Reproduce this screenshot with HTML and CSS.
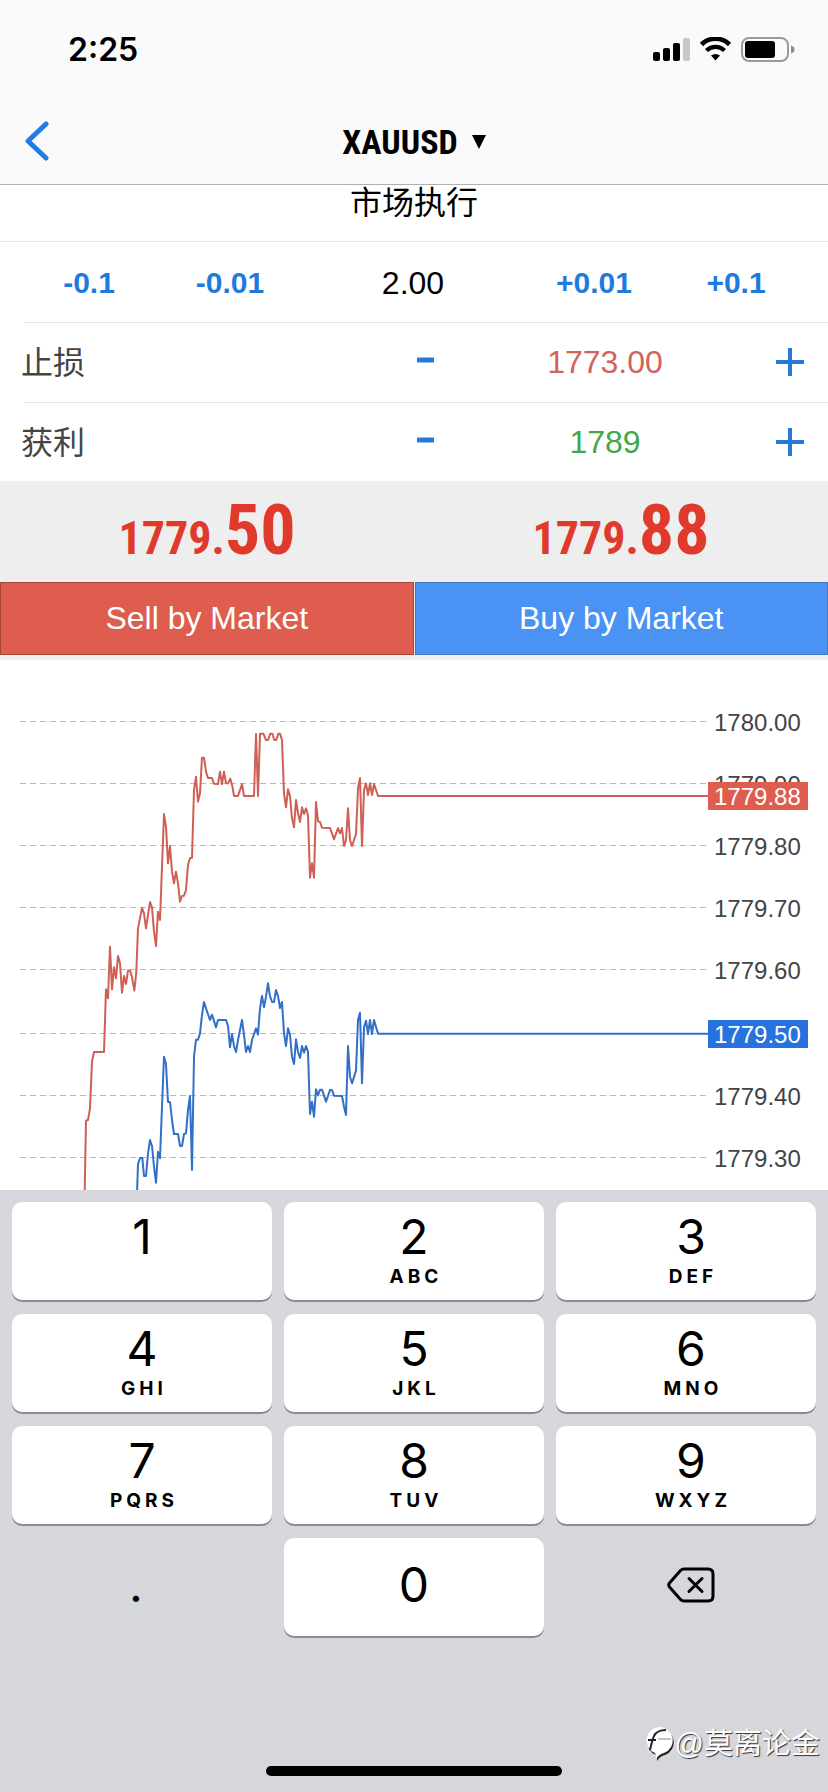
FILE: index.html
```html
<!DOCTYPE html>
<html lang="zh-CN">
<head>
<meta charset="utf-8">
<meta name="viewport" content="width=device-width, initial-scale=1">
<title>XAUUSD</title>
<link rel="stylesheet" href="styles.css">
</head>
<body>
<div class="screen">
  <header class="header">
    <div class="status">
      <span class="time">2:25</span>
      <svg class="status-icons" width="142" height="26" viewBox="0 0 142 26" aria-hidden="true">
        <rect x="0" y="15" width="7" height="9" rx="2"/>
        <rect x="10" y="11" width="7" height="13" rx="2"/>
        <rect x="20" y="6" width="7" height="18" rx="2"/>
        <rect x="30" y="1" width="7" height="23" rx="2" fill="#c8c8c8"/>
        <path d="M48.500 7.500a20 20 0 0 1 28 0" fill="none" stroke="#000" stroke-width="4.600"/>
        <path d="M53.500 13.500a13 13 0 0 1 18 0" fill="none" stroke="#000" stroke-width="4.400"/>
        <path d="M58 18.500q4.500-3 9 0l-4.500 5z"/>
        <rect x="89" y="1" width="46" height="23" rx="7" fill="none" stroke="#9a9a9a" stroke-width="2"/>
        <rect x="92" y="4" width="30" height="17" rx="3"/>
        <path d="M138 8.500q3.500 1 3.500 4t-3.500 4z" fill="#8c8c8c"/>
      </svg>
    </div>
    <nav class="nav">
      <button class="back" type="button" aria-label="返回">
        <svg width="26" height="40" viewBox="0 0 26 40" aria-hidden="true"><path d="M22 3L4 20l18 17" fill="none" stroke="#1f7ce4" stroke-width="5" stroke-linecap="round" stroke-linejoin="round"/></svg>
      </button>
      <button class="symbol" type="button">XAUUSD
        <svg width="14" height="14" viewBox="0 0 14 14" aria-hidden="true"><path d="M0 0h14L7 14z"/></svg>
      </button>
    </nav>
  </header>

  <main class="order">
    <div class="exec">市场执行</div>
    <div class="volume">
      <button class="step" type="button">-0.1</button>
      <button class="step" type="button">-0.01</button>
      <input class="value" aria-label="Volume" value="2.00">
      <button class="step" type="button">+0.01</button>
      <button class="step" type="button">+0.1</button>
    </div>
    <div class="level">
      <label class="level-name" for="sl">止损</label>
      <button class="sign" type="button" aria-label="止损 -"><svg width="28" height="28" viewBox="0 0 28 28"><path d="M6 12h17" stroke-width="5"/></svg></button>
      <input class="value stop" id="sl" value="1773.00">
      <button class="sign" type="button" aria-label="止损 +"><svg width="28" height="28" viewBox="0 0 28 28"><path d="M0 14h28M14 0v28" stroke-width="4"/></svg></button>
    </div>
    <div class="level">
      <label class="level-name" for="tp">获利</label>
      <button class="sign" type="button" aria-label="获利 -"><svg width="28" height="28" viewBox="0 0 28 28"><path d="M6 12h17" stroke-width="5"/></svg></button>
      <input class="value profit" id="tp" value="1789">
      <button class="sign" type="button" aria-label="获利 +"><svg width="28" height="28" viewBox="0 0 28 28"><path d="M0 14h28M14 0v28" stroke-width="4"/></svg></button>
    </div>
    <div class="prices">
      <div class="price">1779.<span class="pips">50</span></div>
      <div class="price">1779.<span class="pips">88</span></div>
    </div>
    <div class="actions">
      <button class="deal sell" type="button">Sell by Market</button>
      <button class="deal buy" type="button">Buy by Market</button>
    </div>
    <svg class="chart" viewBox="0 1 828 530" role="img" aria-label="XAUUSD">
      <g class="grid">
        <path d="M20 62.500H708M20 124.500H708M20 186.500H708M20 248.500H708M20 310.500H708M20 374.500H708M20 436.500H708M20 498.500H708"/>
      </g>
      <g class="axis">
        <text x="714" y="72">1780.00</text>
        <text x="714" y="134">1779.90</text>
        <text x="714" y="196">1779.80</text>
        <text x="714" y="258">1779.70</text>
        <text x="714" y="320">1779.60</text>
        <text x="714" y="446">1779.40</text>
        <text x="714" y="508">1779.30</text>
      </g>
      <g transform="translate(60 41) scale(.333333)">
        <polyline class="line ask" points="74,1480 78,1262 84,1260 90,1225 96,1085 102,1056 132,1056 138,868 144,895 150,740 156,868 162,802 168,835 174,768 180,790 186,878 192,828 198,852 204,812 210,811 216,832 223,872 229,815 234,685 240,655 246,624 252,640 258,685 270,606 276,622 282,695 288,738 294,635 300,660 306,500 312,342 318,380 324,490 330,438 336,515 342,550 348,515 354,550 360,605 366,588 372,587 378,570 384,495 390,474 396,473 402,270 408,230 414,305 420,280 426,173 432,173 438,215 444,234 456,234 462,251 474,252 480,215 486,252 492,215 498,250 504,250 511,236 517,258 522,288 534,288 546,252 552,288 582,288 588,102 594,288 600,101 610,101 618,120 624,120 631,101 637,101 643,120 649,120 655,101 660,101 666,120 672,280 678,322 684,268 690,288 696,355 702,382 708,300 714,340 720,366 726,322 732,342 738,325 744,345 750,533 756,490 762,533 768,306 774,364 780,366 786,383 810,384 816,400 822,418 834,384 840,400 846,384 852,438 858,420 864,325 870,420 876,438 888,402 894,265 900,234 906,438 912,270 918,250 924,285 930,250 936,285 942,252 954,288 1944,288"/>
      </g>
      <g transform="translate(60 281) scale(.333333)">
        <polyline class="line bid" points="231,760 234,672 240,654 247,654 252,708 258,708 264,640 270,600 276,618 282,680 288,728 294,635 300,655 306,500 312,350 318,372 324,486 330,486 336,540 342,582 354,582 360,618 366,618 372,582 378,580 384,510 390,468 396,690 402,350 408,299 414,299 420,280 426,225 432,186 438,205 450,240 456,224 468,262 474,240 498,240 504,258 510,322 516,282 522,318 528,336 534,300 546,240 552,285 558,336 564,318 570,336 576,300 588,265 594,284 600,205 606,168 612,202 618,170 624,130 630,168 636,186 642,186 648,150 654,168 660,204 666,186 672,280 678,318 684,265 690,285 696,350 702,372 708,298 714,336 720,354 726,318 732,338 738,318 744,335 750,522 756,485 762,530 768,448 774,466 780,449 786,449 798,485 810,450 816,450 822,467 846,468 852,500 858,525 864,318 870,410 876,430 888,392 894,240 900,218 906,430 912,262 918,242 924,282 930,240 936,282 942,240 954,281 1944,281"/>
      </g>
      <rect class="tag-ask" x="708" y="123" width="100" height="28"/>
      <text class="tag" x="714" y="146">1779.88</text>
      <rect class="tag-bid" x="708" y="361" width="100" height="28"/>
      <text class="tag" x="714" y="384">1779.50</text>
    </svg>
  </main>

  <footer class="keyboard">
    <div class="keys">
      <button class="key" type="button"><span class="digit">1</span></button>
      <button class="key" type="button"><span class="digit">2</span><span class="letters">ABC</span></button>
      <button class="key" type="button"><span class="digit">3</span><span class="letters">DEF</span></button>
      <button class="key" type="button"><span class="digit">4</span><span class="letters">GHI</span></button>
      <button class="key" type="button"><span class="digit">5</span><span class="letters">JKL</span></button>
      <button class="key" type="button"><span class="digit">6</span><span class="letters">MNO</span></button>
      <button class="key" type="button"><span class="digit">7</span><span class="letters">PQRS</span></button>
      <button class="key" type="button"><span class="digit">8</span><span class="letters">TUV</span></button>
      <button class="key" type="button"><span class="digit">9</span><span class="letters">WXYZ</span></button>
      <button class="key plain point" type="button"><span class="digit">.</span></button>
      <button class="key zero" type="button"><span class="digit">0</span></button>
      <button class="key plain" type="button" aria-label="Delete">
        <svg width="48" height="36" viewBox="0 0 48 36" fill="none" stroke="#000" stroke-width="3" stroke-linecap="round" stroke-linejoin="round" aria-hidden="true"><path d="M17 2h24q5 0 5 5v22q0 5-5 5H17q-2 0-3.500-1.500L2.500 20q-1.500-2 0-4L13.500 3.500Q15 2 17 2z"/><path d="M22 11.500l13 13M35 11.500l-13 13"/></svg>
      </button>
    </div>
    <div class="home"></div>
    <div class="watermark">
      <svg width="30" height="34" viewBox="0 0 30 34" aria-hidden="true">
        <path d="M15 1a14 13.500 0 0 1 5 26q-5 1-8 6 0-4-1-6A13.500 13.500 0 0 1 15 1z" fill="#222" transform="translate(1 1)"/>
        <path d="M15 0a14 13.500 0 0 1 5 26q-5 1-8 6 0-4-1-6A13.500 13.500 0 0 1 15 0z" fill="#fff"/>
        <path d="M6 23q2-9 4-14 3-6 12-6M4 13h8" fill="none" stroke="#222" stroke-width="2"/>
        <path d="M14 12h13" fill="none" stroke="#888" stroke-width="1"/>
      </svg>
      <span>@莫离论金</span>
    </div>
  </footer>
</div>
</body>
</html>
```
FILE: styles.css
```css
* { box-sizing: border-box; }

body {
  margin: 0;
  background: #fff;
  color: #000;
  font-family: "Liberation Sans", "Noto Sans CJK SC", sans-serif;
}

button, input {
  margin: 0;
  padding: 0;
  border: 0;
  border-radius: 0;
  background: none;
  color: inherit;
  font: inherit;
}

input { width: 100%; min-width: 0; text-align: center; }
svg { display: block; }

.screen { display: flex; flex-direction: column; min-height: 100vh; }

/* Header */
.header { background: #fafafa; border-bottom: 1px solid #b0b0b2; }

.status {
  display: flex;
  align-items: center;
  justify-content: space-between;
  height: 98px;
  padding: 2px 33px 0 68px;
}

.time { font: 600 32px/40px Inter, sans-serif; }

.nav {
  display: grid;
  grid-template-columns: 1fr auto 1fr;
  align-items: center;
  height: 86px;
  padding: 0 24px;
}

.back { justify-self: start; }

.symbol {
  display: flex;
  align-items: center;
  gap: 14px;
  padding-top: 2px;
  font: bold 34px/40px "Liberation Sans Narrow", "Roboto Condensed", "Liberation Sans", sans-serif;
}

/* Order form */
.exec {
  height: 57px;
  border-bottom: 1px solid #e4e4e6;
  font-size: 32px;
  line-height: 36px;
  text-align: center;
}

.volume {
  display: grid;
  grid-template-columns: 178fr 104fr 262fr 100fr 184fr;
  height: 80px;
  padding-top: 2px;
}

.step { color: #1f7ae0; font-size: 30px; font-weight: bold; }
.value { font-size: 32px; }

.level {
  position: relative;
  display: grid;
  grid-template-columns: 392fr 66fr 294fr 76fr;
  align-items: center;
  height: 80px;
}

.level + .prices { margin-top: -1px; }

.level::before {
  content: "";
  position: absolute;
  top: 0;
  right: 0;
  left: 24px;
  border-top: 1px solid #e4e4e6;
}

.level-name { padding: 0 0 4px 21px; color: #444; font-size: 32px; }
.sign { display: flex; justify-content: center; }
.sign svg { stroke: #2878d8; }
.stop { color: #d0645a; }
.profit { color: #43a647; }

.prices {
  display: grid;
  grid-template-columns: 1fr 1fr;
  height: 101px;
  background: #eee;
  color: #e03a2c;
  font: bold 46px/99px "Liberation Sans Narrow", "Roboto Condensed", "Liberation Sans", sans-serif;
  text-align: center;
}

.pips { font-size: 70px; }

.actions {
  display: grid;
  grid-template-columns: 1fr 1fr;
  gap: 1px;
  padding-bottom: 5px;
  background: #f2eff0;
}

.deal { height: 73px; color: #fff; font-size: 32px; }
.sell { border: 1px solid #a9463c; background: #de5d4e; }
.buy { border: 1px solid #4377bd; background: #4a92f3; }

/* Tick chart */
.chart { width: 100%; height: auto; font-size: 24px; }
.grid path { stroke: #b8b8b8; stroke-dasharray: 6 4; }
.axis { fill: #444; }
.line { fill: none; stroke-width: 6; stroke-linejoin: round; }
.ask { stroke: #cf6055; }
.bid { stroke: #3270c8; }
.tag { fill: #fff; }
.tag-ask { fill: #de5d4e; }
.tag-bid { fill: #2672de; }

/* Keyboard */
.keyboard {
  position: relative;
  display: flex;
  flex: 1;
  flex-direction: column;
  justify-content: space-between;
  align-items: center;
  padding: 12px 12px 16px;
  background: #d6d7dd;
}

.keys {
  display: grid;
  grid-template-columns: 1fr 1fr 1fr;
  gap: 14px 12px;
  width: 100%;
}

.key {
  display: flex;
  flex-direction: column;
  align-items: center;
  height: 98px;
  padding-top: 10px;
  border-radius: 10px;
  background: #fff;
  box-shadow: 0 2px 0 #8b8c90;
  font-family: Inter, sans-serif;
}

.key:nth-child(3n) { padding-left: 10px; }

.digit { font-size: 48px; line-height: 50px; }
.letters { font-size: 19px; font-weight: 700; line-height: 30px; letter-spacing: 4px; text-indent: 4px; }
.zero, .plain { justify-content: center; padding: 0 0 4px; }
.plain { background: none; box-shadow: none; }
.point { padding-right: 12px; }

.home { width: 296px; height: 10px; border-radius: 5px; background: #000; }

.watermark {
  position: absolute;
  right: 8px;
  bottom: 28px;
  display: flex;
  align-items: center;
  gap: 1px;
  color: #fff;
  font-size: 29px;
  line-height: 40px;
  text-shadow: 1px 1px 1px #333;
}
```
